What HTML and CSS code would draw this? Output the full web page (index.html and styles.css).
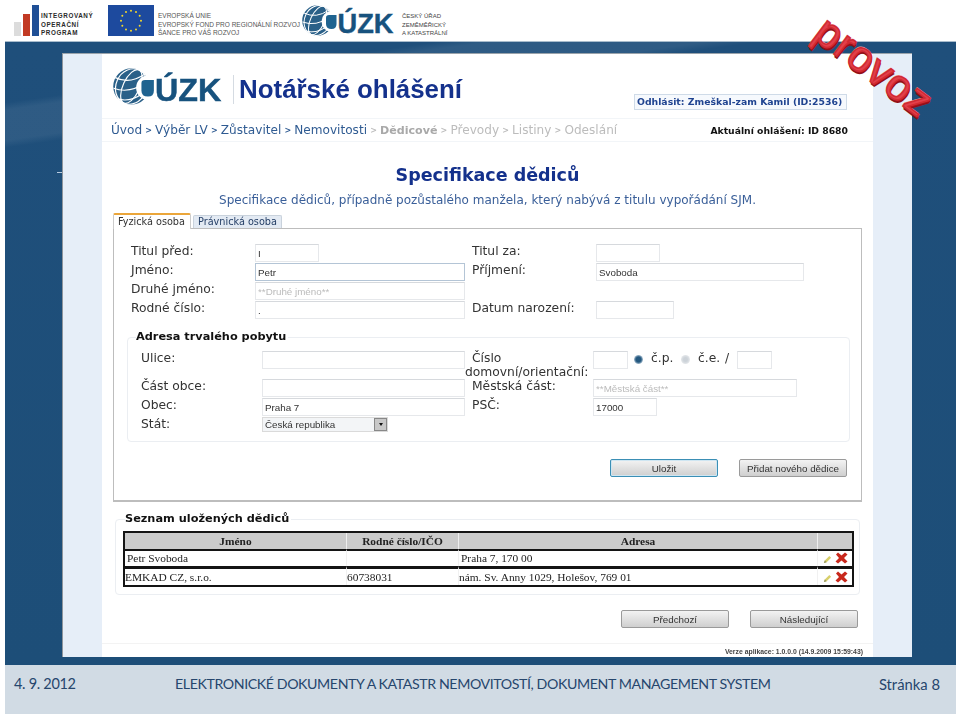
FILE: index.html
```html
<!DOCTYPE html>
<html lang="cs">
<head>
<meta charset="utf-8">
<title>Elektronické dokumenty a katastr nemovitostí</title>
<link rel="stylesheet" href="styles.css">
</head>
<body>
<svg class="defs" width="0" height="0" aria-hidden="true">
  <symbol id="globe" viewBox="0 0 36 31">
    <circle cx="15.5" cy="15.5" r="15.3" fill="#2a6088"/>
    <g fill="none" stroke="#fff" stroke-width="1">
      <ellipse cx="15.5" cy="15.5" rx="7" ry="15.3" transform="rotate(25 15.5 15.5)"/>
      <ellipse cx="15.5" cy="15.5" rx="13" ry="15.3" transform="rotate(25 15.5 15.5)"/>
      <path d="M2 8 Q14 14 27 5M.5 17 Q14 22 28 12M4 26 Q14 29 24 22"/>
    </g>
    <circle cx="30" cy="16.5" r="10.5" fill="#fff"/>
    <path d="M24 12.5 q0-2.5 3-2.5h7.5v9q0 5-5 5q-5.500 0-5.500-5z" fill="#1f6390"/>
  </symbol>
  <symbol id="pencil" viewBox="0 0 10 10">
    <path d="M1 9l1-3 5-5 2 2-5 5z" fill="#d8cf6a"/>
    <path d="M1 9l1-3 2 2z" fill="#8f8f60"/>
  </symbol>
  <symbol id="cross" viewBox="0 0 13 12">
    <path d="M1 2.500 3 .5l3.500 3L10 .5l2.500 2L9 6l3.500 3.500-2.500 2L6.500 8.500 3 11.500 .5 9.500 4 6z" fill="#c8281c"/>
  </symbol>
</svg>

<header class="logos">
  <div class="iop">
    <div class="bars"><i class="bar bar-grey"></i><i class="bar bar-red"></i><i class="bar bar-blue"></i></div>
    <div class="iop-text">INTEGROVANÝ<br>OPERAČNÍ<br>PROGRAM</div>
  </div>
  <svg class="flag" viewBox="0 0 46 31" aria-hidden="true">
    <rect width="46" height="31" fill="#1d4a9e"/>
    <g fill="#f4d92a">
      <circle cx="23" cy="5.700" r="1"/><circle cx="28" cy="7" r="1"/><circle cx="31.700" cy="10.700" r="1"/>
      <circle cx="33" cy="15.700" r="1"/><circle cx="31.700" cy="20.700" r="1"/><circle cx="28" cy="24.400" r="1"/>
      <circle cx="23" cy="25.700" r="1"/><circle cx="18" cy="24.400" r="1"/><circle cx="14.300" cy="20.700" r="1"/>
      <circle cx="13" cy="15.700" r="1"/><circle cx="14.300" cy="10.700" r="1"/><circle cx="18" cy="7" r="1"/>
    </g>
  </svg>
  <div class="eu-text">EVROPSKÁ UNIE<br>EVROPSKÝ FOND PRO REGIONÁLNÍ ROZVOJ<br>ŠANCE PRO VÁŠ ROZVOJ</div>
  <svg class="cuzk-small" viewBox="0 0 92 31">
    <use href="#globe" width="36" height="31"/>
    <text x="35.500" y="27.500" class="cuzk-text" textLength="56" lengthAdjust="spacingAndGlyphs">ÚZK</text>
  </svg>
  <div class="cuzk-name">ČESKÝ ÚŘAD<br>ZEMĚMĚŘICKÝ<br>A KATASTRÁLNÍ</div>
</header>

<section class="slide">
  <div class="shot">
    <div class="side"></div>
    <main class="page">
      <div class="top">
        <svg class="cuzk-big" viewBox="0 0 92 31">
          <use href="#globe" width="36" height="31"/>
          <text x="35.500" y="27.500" class="cuzk-text" textLength="56" lengthAdjust="spacingAndGlyphs">ÚZK</text>
        </svg>
        <h1 class="app-title">Notářské ohlášení</h1>
        <div class="login">Odhlásit: Zmeškal-zam Kamil (ID:2536)</div>
      </div>
      <nav class="crumbs">
        <span>Úvod</span><b class="sep">&gt;</b><span>Výběr LV</span><b class="sep">&gt;</b><span>Zůstavitel</span><b class="sep">&gt;</b><span>Nemovitosti</span><b class="sep off">&gt;</b><span class="current">Dědicové</span><b class="sep off">&gt;</b><span class="off">Převody</span><b class="sep off">&gt;</b><span class="off">Listiny</span><b class="sep off">&gt;</b><span class="off">Odeslání</span>
        <strong class="report">Aktuální ohlášení: ID 8680</strong>
      </nav>
      <h2 class="heading">Specifikace dědiců</h2>
      <p class="sub">Specifikace dědiců, případně pozůstalého manžela, který nabývá z titulu vypořádání SJM.</p>

      <div class="tabs">
        <div class="tab tab-on">Fyzická osoba</div>
        <div class="tab">Právnická osoba</div>
      </div>
      <div class="panel">
        <div class="person">
          <label class="lbl">Titul před:</label><div><input class="in w64" value="I"></div>
          <label class="lbl lbl-r">Titul za:</label><div><input class="in w64"></div>
          <label class="lbl">Jméno:</label><div><input class="in w210 focus" value="Petr"></div>
          <label class="lbl lbl-r">Příjmení:</label><div><input class="in w208" value="Svoboda"></div>
          <label class="lbl">Druhé jméno:</label><div><input class="in w210" placeholder="**Druhé jméno**"></div>
          <div></div><div></div>
          <label class="lbl">Rodné číslo:</label><div><input class="in w210" value="."></div>
          <label class="lbl lbl-r">Datum narození:</label><div><input class="in w78"></div>
        </div>

        <fieldset class="box addr-box">
          <legend class="legend">Adresa trvalého pobytu</legend>
          <div class="addr">
            <label class="lbl lbl-a">Ulice:</label><div><input class="in w203"></div>
            <label class="lbl lbl-two"><span class="indent">Číslo</span><br>domovní/orientační:</label>
            <div class="house">
              <input class="in w35">
              <i class="radio radio-on"></i><span class="opt">č.p.</span>
              <i class="radio"></i><span class="opt">č.e.</span><span class="slash">/</span>
              <input class="in w35">
            </div>
            <label class="lbl lbl-a">Část obce:</label><div><input class="in w203"></div>
            <label class="lbl lbl-r">Městská část:</label><div><input class="in w204" placeholder="**Městská část**"></div>
            <label class="lbl lbl-a">Obec:</label><div><input class="in w203" value="Praha 7"></div>
            <label class="lbl lbl-r">PSČ:</label><div><input class="in w64" value="17000"></div>
            <label class="lbl lbl-a">Stát:</label>
            <div class="select"><span class="select-val">Česká republika</span><span class="select-btn"><i class="caret"></i></span></div>
            <div></div><div></div>
          </div>
        </fieldset>

        <div class="actions actions-panel">
          <button class="btn btn-on" type="button">Uložit</button>
          <button class="btn" type="button">Přidat nového dědice</button>
        </div>
      </div>

      <fieldset class="box list-box">
        <legend class="legend legend-list">Seznam uložených dědiců</legend>
        <table class="heirs">
          <colgroup><col class="c1"><col class="c2"><col class="c3"><col class="c4"></colgroup>
          <thead>
            <tr><th>Jméno</th><th>Rodné číslo/IČO</th><th>Adresa</th><th></th></tr>
          </thead>
          <tbody>
            <tr>
              <td>Petr Svoboda</td><td></td><td>Praha 7, 170 00</td>
              <td class="tools"><svg class="ic-pen" aria-hidden="true"><use href="#pencil"/></svg><svg class="ic-x" aria-hidden="true"><use href="#cross"/></svg></td>
            </tr>
            <tr class="row-2">
              <td>EMKAD CZ, s.r.o.</td><td>60738031</td><td>nám. Sv. Anny 1029, Holešov, 769 01</td>
              <td class="tools"><svg class="ic-pen" aria-hidden="true"><use href="#pencil"/></svg><svg class="ic-x" aria-hidden="true"><use href="#cross"/></svg></td>
            </tr>
          </tbody>
        </table>
      </fieldset>

      <div class="actions actions-page">
        <button class="btn" type="button">Předchozí</button>
        <button class="btn" type="button">Následující</button>
      </div>
      <div class="version">Verze aplikace: 1.0.0.0 (14.9.2009 15:59:43)</div>
    </main>
    <div class="side"></div>
  </div>
  <div class="stamp">provoz</div>
</section>

<footer class="foot">
  <span class="foot-date">4. 9. 2012</span>
  <span class="foot-title">ELEKTRONICKÉ DOKUMENTY A KATASTR NEMOVITOSTÍ, DOKUMENT MANAGEMENT SYSTEM</span>
  <span class="foot-page">Stránka 8</span>
</footer>
</body>
</html>
```

FILE: styles.css
```css
* { box-sizing: border-box; }
html, body { margin: 0; padding: 0; }
body {
  width: 960px;
  height: 716px;
  overflow: hidden;
  background: #fff;
  font-family: "DejaVu Sans", sans-serif;
  position: relative;
}
.defs { position: absolute; }
.cuzk-text { font: bold 27px "Liberation Sans", sans-serif; fill: #17527e; stroke: #17527e; stroke-width: .4px; }

/* top logo strip */
.logos {
  height: 41px;
  display: flex;
  align-items: flex-start;
  padding: 5px 0 0 14px;
}
.iop { display: flex; width: 94px; }
.bars { display: flex; align-items: flex-end; gap: 2px; height: 31px; width: 27px; flex: none; }
.bar { display: block; width: 7px; }
.bar-grey { height: 14px; background: #dcdcdc; }
.bar-red { height: 22px; background: #c23a24; }
.bar-blue { height: 31px; background: #1f4f96; }
.iop-text {
  font: bold 6.300px/8.500px "Liberation Sans", sans-serif;
  letter-spacing: .6px;
  color: #2b2b2b;
  padding-top: 7px;
  white-space: nowrap;
}
.flag { width: 46px; height: 31px; flex: none; }
.eu-text {
  width: 144px;
  margin-left: 4px;
  padding-top: 7px;
  font: 6.500px/8.500px "Liberation Sans", sans-serif;
  color: #555;
  white-space: nowrap;
}
.cuzk-small { width: 92px; height: 31px; flex: none; overflow: visible; }
.cuzk-name {
  margin-left: 8px;
  padding-top: 7px;
  font: 6px/8.500px "Liberation Sans", sans-serif;
  color: #444;
  white-space: nowrap;
}

/* slide */
.slide {
  position: relative;
  width: 951px;
  height: 624px;
  margin-left: 5px;
  padding: 11px 0 0 57px;
  border-top: 1px solid #a9bccc;
  background:
    linear-gradient(172deg, transparent 8%, rgba(255,255,255,.07) 9%, rgba(255,255,255,.07) 13%, transparent 14%),
    linear-gradient(#1f4f7b, #1d4e78);
}
.slide::before {
  content: "";
  position: absolute;
  left: 52px;
  top: 130px;
  width: 5px;
  height: 1px;
  background: #b7cbe0;
}
.shot {
  display: flex;
  width: 850px;
  height: 604px;
  border-left: 1px solid #8f959c;
  border-top: 1px solid #9aa3ab;
  background: #fff;
  filter: blur(.3px);
}
.side { width: 39px; flex: none; background: #e6eef8; }
.page { width: 771px; flex: none; background: #fff; }

.top {
  height: 64px;
  display: flex;
  align-items: flex-start;
  padding: 14px 26px 0 11px;
}
.cuzk-big { width: 109px; height: 37px; flex: none; overflow: visible; }
.app-title {
  margin: 7px 0 0 11px;
  padding-left: 5px;
  border-left: 1px solid #d5dbe2;
  font: bold 25.900px/29px "Liberation Sans", sans-serif;
  color: #14318c;
  white-space: nowrap;
}
.login {
  margin: 26px 0 0 auto;
  height: 16px;
  width: 213px;
  padding: 0 0 0 2px;
  border: 1px solid #cfdbe8;
  background: #f6f9fd;
  font: bold 9.300px/14px "DejaVu Sans", sans-serif;
  color: #1f4390;
  white-space: nowrap;
}
.crumbs {
  height: 24px;
  display: flex;
  align-items: center;
  padding: 0 25px 0 9px;
  border-top: 1px solid #f2f5f8;
  border-bottom: 1px solid #f2f5f8;
  font-size: 12.100px;
  color: #2f5b92;
  white-space: nowrap;
}
.sep { width: 13px; text-align: center; font-size: 8px; color: #2f5b92; }
.sep.off { color: #aaa; }
.crumbs .off { color: #bcbcbc; }
.crumbs .current { font-weight: bold; font-size: 11.100px; color: #a9a9a9; }
.report { margin-left: auto; font-size: 9.260px; color: #111; }

.heading {
  margin: 23px 0 0;
  font: bold 17.500px/20px "DejaVu Sans", sans-serif;
  color: #14318c;
  text-align: center;
}
.sub {
  margin: 7px 0 0;
  font-size: 12px;
  line-height: 16px;
  color: #3a5f99;
  text-align: center;
  white-space: nowrap;
}

.tabs { display: flex; gap: 2px; margin: 5px 0 0 11px; height: 15px; align-items: flex-end; }
.tab {
  height: 13px;
  padding: 0 4px;
  font-size: 9.700px;
  line-height: 12px;
  color: #243e66;
  background: #e3eaf3;
  border: 1px solid #c9d2dc;
  border-bottom: 0;
  border-radius: 2px 2px 0 0;
}
.tab-on {
  height: 16px;
  width: 78px;
  padding: 1px 0 0 4px;
  color: #333;
  background: #fff;
  border-style: solid;
  border-width: 2px 1px 0;
  border-color: #eba63a #ccc #fff;
  margin-bottom: -1px;
  position: relative;
}

.panel {
  width: 749px;
  margin-left: 11px;
  padding: 15px 0 23px;
  border: 1px solid #bdbdbd;
  border-bottom-width: 2px;
}
.person {
  display: grid;
  grid-template-columns: 141px 210px 131px 1fr;
  grid-auto-rows: 19px;
}
.lbl {
  font-size: 12.300px;
  line-height: 15px;
  color: #333;
  padding-left: 17px;
  white-space: nowrap;
}
.lbl-r { padding-left: 7px; }
.lbl-a { padding-left: 13px; }
.lbl-two { line-height: 14px; padding-left: 0; }
.indent { padding-left: 7px; }

.in {
  display: block;
  height: 18px;
  padding: 0 2px;
  border: 1px solid #e6e8eb;
  border-top-color: #d6d9dd;
  background: #fff;
  font: 9.800px "Liberation Sans", sans-serif;
  color: #333;
  outline: 0;
}
.in::placeholder { color: #bbb; opacity: 1; }
.focus { border-color: #b4c5d6; }
.w35 { width: 35px; flex: none; }
.w64 { width: 64px; }
.w78 { width: 78px; }
.w203 { width: 203px; }
.w204 { width: 204px; }
.w208 { width: 208px; }
.w210 { width: 210px; }

.box {
  min-width: 0;
  margin: 0;
  padding: 0;
  border: 1px solid #ebeef2;
  border-radius: 4px;
}
.legend {
  padding: 0 2px 0 0;
  margin-left: 8px;
  font: bold 11.300px/14px "DejaVu Sans", sans-serif;
  color: #111;
}
.addr-box {
  width: 723px;
  margin: 10px 0 0 13px;
  padding: 7px 0 8px;
}
.addr {
  display: grid;
  grid-template-columns: 134px 203px 128px 1fr;
  grid-template-rows: 28px 19px 19px 16px;
}
.house { display: flex; align-items: flex-start; }
.radio {
  width: 9px;
  height: 9px;
  margin: 4px 0 0 6px;
  border-radius: 50%;
  background: radial-gradient(circle, #ccd2d8 30%, #e4e7ea 70%);
  flex: none;
}
.radio-on { background: radial-gradient(circle, #24587f 40%, #b9ccdb 75%); }
.opt { font-size: 12.300px; line-height: 15px; color: #333; margin-left: 8px; width: 24px; flex: none; }
.slash { font-size: 12.300px; line-height: 15px; color: #333; width: 12px; margin-left: 3px; flex: none; }
.select {
  display: flex;
  width: 126px;
  height: 15px;
  border: 1px solid #dadada;
  background: #f3f5f7;
  font: 9.800px/13px "Liberation Sans", sans-serif;
  color: #333;
}
.select-val { flex: 1; padding-left: 2px; }
.select-btn {
  width: 13px;
  background: #c8c8c8;
  border: 1px solid #888;
  display: flex;
  align-items: center;
  justify-content: center;
}
.caret { width: 0; height: 0; border: 2.500px solid transparent; border-top: 3px solid #111; border-bottom: 0; }

.actions { display: flex; justify-content: flex-end; gap: 21px; }
.actions-panel { margin: 17px 14px 0 0; }
.actions-page { margin: 15px 15px 0 0; }
.btn {
  width: 108px;
  height: 18px;
  padding: 0;
  border: 1px solid #9a9a9a;
  border-radius: 2px;
  background: linear-gradient(#f3f3f3, #cfcfcf);
  font: 9.800px/15px "Liberation Sans", sans-serif;
  color: #333;
}
.btn-on { border-color: #3b8fb5; box-shadow: inset 0 0 0 1px #cfe6f2; }

.list-box {
  width: 745px;
  margin: 10px 0 0 13px;
  padding: 5px 7px 7px;
}
.legend-list { margin-left: 2px; }
.heirs {
  width: 729px;
  table-layout: fixed;
  border-collapse: separate;
  border-spacing: 0;
  border: 2px solid #141414;
  font: 11.400px "Liberation Serif", serif;
  color: #222;
}
.c1 { width: 222px; }
.c2 { width: 112px; }
.c3 { width: 359px; }
.c4 { width: 34px; }
.heirs th {
  height: 16px;
  padding: 0;
  background: #cbcbcb;
  border-right: 1px solid #eee;
  font-weight: bold;
  font-size: 11.400px;
  line-height: 14px;
}
.heirs td { height: 17px; padding: 0 0 1px 2px; border-top: 2px solid #141414; border-right: 1px solid #f1f1f1; background: #fff; white-space: nowrap; }
.heirs .row-2 td { height: 19px; border-top-width: 3px; padding-left: 0; }
.heirs th:last-child, .heirs td:last-child { border-right: 0; }
.heirs td.tools { padding: 0 0 0 5px; }
.ic-pen { width: 9px; height: 9px; margin-right: 3px; vertical-align: -1px; }
.ic-x { width: 13px; height: 12px; vertical-align: -1px; }

.version {
  margin-top: 15px;
  padding: 3px 10px 0 0;
  border-top: 1px solid #f3f3f3;
  font: bold 6.850px/9px "Liberation Sans", sans-serif;
  color: #444;
  text-align: right;
}

.stamp {
  position: absolute;
  left: 802px;
  top: 1px;
  transform: rotate(37deg);
  font: 43px/46px "Liberation Sans", sans-serif;
  letter-spacing: 1px;
  color: #e2404a;
  -webkit-text-stroke: 1.500px #d02a33;
  text-shadow: 1px 1px 0 #a8121b, 2px 2px 0 #8f1018, -1px -1px 0 #f5a3a6;
}

/* footer */
.foot {
  width: 951px;
  height: 49px;
  margin-left: 5px;
  padding: 8px 16px 0 9px;
  display: flex;
  align-items: flex-start;
  background: #d1dbe4;
  font: 14.800px/22px "Lato", "Open Sans", sans-serif;
  color: #26466d;
  white-space: nowrap;
}
.foot-date { width: 161px; font-size: 14.500px; letter-spacing: -.3px; }
.foot-title { font-size: 14.200px; letter-spacing: -.41px; }
.foot-page { margin-left: auto; }
```
